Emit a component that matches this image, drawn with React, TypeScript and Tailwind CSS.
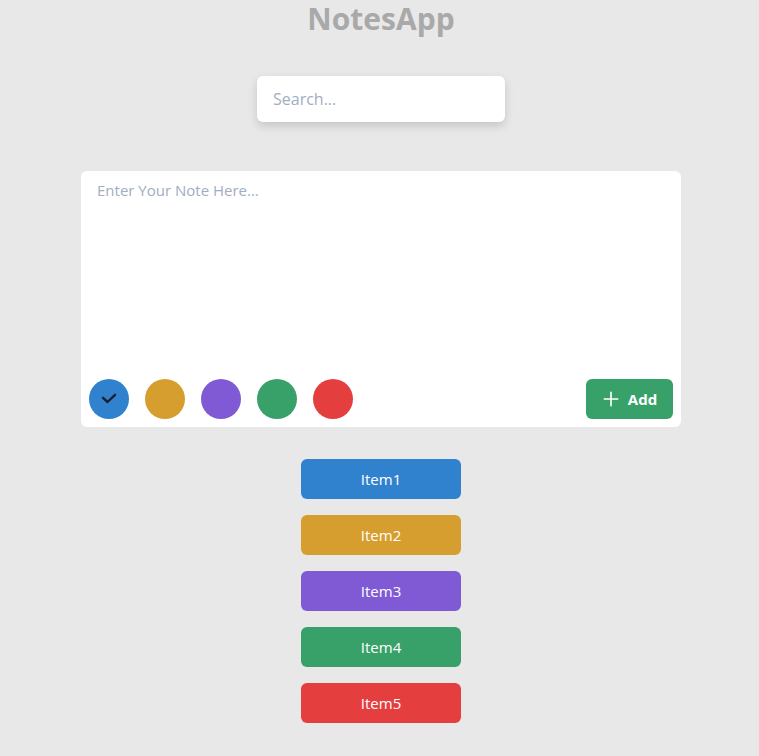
import React, { useState } from "react";

const colors = [
  { bg: "bg-[#3182ce]", name: "Item1" },
  { bg: "bg-[#d69e2e]", name: "Item2" },
  { bg: "bg-[#805ad5]", name: "Item3" },
  { bg: "bg-[#38a169]", name: "Item4" },
  { bg: "bg-[#e53e3e]", name: "Item5" },
];

export default function App() {
  const [selected, setSelected] = useState(0);
  return (
    <div className="min-h-[756px] bg-[#e8e8e8] pl-[3px] flex flex-col items-center font-['Open_Sans',sans-serif]">
      <h1 className="text-[30px] leading-[38px] font-bold text-[#a9a9a9] mt-0">NotesApp</h1>
      <input
        placeholder="Search..."
        className="mt-[38px] w-[248px] h-[46px] rounded-md bg-white px-4 text-[16px] text-gray-700 placeholder:text-[#a0aec0] shadow-[0_4px_10px_rgba(0,0,0,0.15)] outline-none"
      />
      <div className="mt-[49px] w-[600px] h-[256px] bg-white rounded-md flex flex-col">
        <textarea
          placeholder="Enter Your Note Here..."
          className="flex-1 resize-none outline-none px-4 pt-2 text-[15px] text-gray-700 placeholder:text-[#a0aec0] rounded-t-md"
        />
        <div className="flex items-center justify-between px-2 pb-2">
          <div className="flex gap-4">
            {colors.map((c, i) => (
              <button
                key={i}
                onClick={() => setSelected(i)}
                className={`w-10 h-10 rounded-full ${c.bg} flex items-center justify-center`}
              >
                {selected === i && (
                  <svg width="18" height="18" viewBox="0 0 24 24" fill="none" stroke="#1a202c" strokeWidth="3.2" strokeLinecap="round" strokeLinejoin="round">
                    <path d="M4 10.5l6 5.5L20 6.5" />
                  </svg>
                )}
              </button>
            ))}
          </div>
          <button className="w-[87px] h-10 rounded-md bg-[#38a169] text-white font-bold text-[15px] flex items-center justify-center gap-2">
            <svg width="18" height="18" viewBox="0 0 24 24" fill="none" stroke="white" strokeWidth="2.2" strokeLinecap="round">
              <path d="M12 3v18M3 12h18" />
            </svg>
            Add
          </button>
        </div>
      </div>
      <div className="mt-8 flex flex-col gap-4">
        {colors.map((c, i) => (
          <div key={i} className={`w-40 h-10 rounded-md ${c.bg} text-white text-[15px] flex items-center justify-center`}>
            {c.name}
          </div>
        ))}
      </div>
    </div>
  );
}
